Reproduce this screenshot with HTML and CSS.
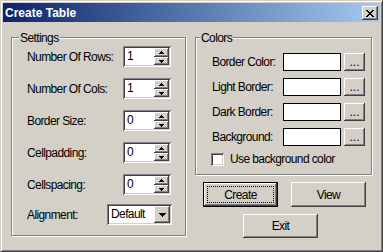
FILE: index.html
```html
<!DOCTYPE html>
<html lang="en">
<head>
    <meta charset="UTF-8">
    <title>Create Table</title>
    <link rel="stylesheet" href="styles.css">
</head>
<body>
    <div class="window">
        <div class="titlebar">
            <span class="title">Create Table</span>
            <button class="close">
                <svg width="8" height="7" viewBox="0 0 8 7" shape-rendering="crispEdges"><path d="M0 0h2v1H0zM6 0h2v1H6zM1 1h2v1H1zM5 1h2v1H5zM2 2h4v1H2zM3 3h2v1H3zM2 4h4v1H2zM1 5h2v1H1zM5 5h2v1H5zM0 6h2v1H0zM6 6h2v1H6z"/></svg>
            </button>
        </div>

        <div class="content">
            <div class="group settings">
                <span class="legend">Settings</span>
                <div class="row">
                    <label>Number Of Rows:</label>
                    <div class="field spin"><span class="val">1</span><div class="spin-btns"><span class="up"><svg width="5" height="3" shape-rendering="crispEdges"><path d="M2 0h1v1h1v1h1v1H0V2h1V1h1z"/></svg></span><span class="down"><svg width="5" height="3" shape-rendering="crispEdges"><path d="M0 0h5v1H4v1H3v1H2V2H1V1H0z"/></svg></span></div></div>
                </div>
                <div class="row">
                    <label>Number Of Cols:</label>
                    <div class="field spin"><span class="val">1</span><div class="spin-btns"><span class="up"><svg width="5" height="3" shape-rendering="crispEdges"><path d="M2 0h1v1h1v1h1v1H0V2h1V1h1z"/></svg></span><span class="down"><svg width="5" height="3" shape-rendering="crispEdges"><path d="M0 0h5v1H4v1H3v1H2V2H1V1H0z"/></svg></span></div></div>
                </div>
                <div class="row">
                    <label>Border Size:</label>
                    <div class="field spin"><span class="val">0</span><div class="spin-btns"><span class="up"><svg width="5" height="3" shape-rendering="crispEdges"><path d="M2 0h1v1h1v1h1v1H0V2h1V1h1z"/></svg></span><span class="down"><svg width="5" height="3" shape-rendering="crispEdges"><path d="M0 0h5v1H4v1H3v1H2V2H1V1H0z"/></svg></span></div></div>
                </div>
                <div class="row">
                    <label>Cellpadding:</label>
                    <div class="field spin"><span class="val">0</span><div class="spin-btns"><span class="up"><svg width="5" height="3" shape-rendering="crispEdges"><path d="M2 0h1v1h1v1h1v1H0V2h1V1h1z"/></svg></span><span class="down"><svg width="5" height="3" shape-rendering="crispEdges"><path d="M0 0h5v1H4v1H3v1H2V2H1V1H0z"/></svg></span></div></div>
                </div>
                <div class="row">
                    <label>Cellspacing:</label>
                    <div class="field spin"><span class="val">0</span><div class="spin-btns"><span class="up"><svg width="5" height="3" shape-rendering="crispEdges"><path d="M2 0h1v1h1v1h1v1H0V2h1V1h1z"/></svg></span><span class="down"><svg width="5" height="3" shape-rendering="crispEdges"><path d="M0 0h5v1H4v1H3v1H2V2H1V1H0z"/></svg></span></div></div>
                </div>
                <div class="row align-row">
                    <label>Alignment:</label>
                    <div class="field select"><span class="val">Default</span><span class="drop"><svg width="7" height="4" shape-rendering="crispEdges"><path d="M0 0h7v1H6v1H5v1H4v1H3V3H2V2H1V1H0z"/></svg></span></div>
                </div>
            </div>

            <div class="side">
                <div class="group colors">
                    <span class="legend">Colors</span>
                    <div class="crow"><label>Border Color:</label><div class="swatch"></div><button class="dots">...</button></div>
                    <div class="crow"><label>Light Border:</label><div class="swatch"></div><button class="dots">...</button></div>
                    <div class="crow"><label>Dark Border:</label><div class="swatch"></div><button class="dots">...</button></div>
                    <div class="crow"><label>Background:</label><div class="swatch"></div><button class="dots">...</button></div>
                    <div class="check"><span class="box"></span><span>Use background color</span></div>
                </div>
                <div class="btnrow">
                    <button class="btn default"><span class="focus">Create</span></button>
                    <button class="btn">View</button>
                </div>
                <div class="btnrow exit-row">
                    <button class="btn exit">Exit</button>
                </div>
            </div>
        </div>
    </div>
</body>
</html>
```

FILE: styles.css
```css
body {
    margin: 0;
    background-color: #d4d0c8;
}
.window {
    width: 383px;
    height: 252px;
    box-sizing: border-box;
    background-color: #d4d0c8;
    border: 1px solid;
    border-color: #d4d0c8 #404040 #404040 #d4d0c8;
    box-shadow: inset 1px 1px #fff, inset -1px -1px #808080;
    padding: 2px;
    font-family: "Liberation Sans", Arial, sans-serif;
    font-size: 12px;
    letter-spacing: -0.6px;
    color: #000;
}
button {
    font: inherit;
    letter-spacing: inherit;
    color: #000;
    margin: 0;
}
.titlebar {
    display: flex;
    align-items: center;
    height: 19px;
    padding: 0 2px;
    background: linear-gradient(to right, #0a246a, #a6caf0);
}
.title {
    flex: 1;
    color: #fff;
    font-weight: bold;
    letter-spacing: 0;
}
.close {
    width: 16px;
    height: 14px;
    padding: 1px 0 0;
    border: none;
    background-color: #d4d0c8;
    box-shadow: inset -1px -1px #404040, inset 1px 1px #fff, inset -2px -2px #808080;
    display: flex;
    align-items: center;
    justify-content: center;
}
.content {
    display: flex;
    gap: 9px;
    padding: 15px 0 0 8px;
}
.group {
    position: relative;
    box-sizing: border-box;
    border: 1px solid #808080;
    box-shadow: inset 1px 1px #fff, 1px 1px #fff;
}
.legend {
    position: absolute;
    top: -7px;
    left: 7px;
    padding: 0 1px;
    line-height: 14px;
    background-color: #d4d0c8;
}
.colors .legend {
    left: 4px;
}
.settings {
    width: 175px;
    height: 199px;
    padding: 8px 14px 0 15px;
    display: flex;
    flex-direction: column;
    gap: 11px;
}
.row {
    display: flex;
    align-items: center;
    justify-content: space-between;
    height: 21px;
}
.align-row {
    margin-top: -2px;
}
.field {
    box-sizing: border-box;
    height: 21px;
    padding: 2px;
    display: flex;
    background-color: #fff;
    box-shadow: inset 1px 1px #808080, inset -1px -1px #fff, inset 2px 2px #404040, inset -2px -2px #d4d0c8;
}
.field .val {
    flex: 1;
    padding-left: 2px;
    line-height: 17px;
}
.spin {
    width: 48px;
}
.spin-btns {
    width: 15px;
    display: flex;
    flex-direction: column;
}
.spin-btns span,
.drop {
    background-color: #d4d0c8;
    box-shadow: inset -1px -1px #404040, inset 1px 1px #fff, inset -2px -2px #808080;
    display: flex;
    align-items: center;
    justify-content: center;
}
.spin-btns .up {
    height: 9px;
}
.spin-btns .down {
    height: 8px;
}
.spin-btns svg {
    display: block;
}
.select {
    width: 65px;
    margin-right: -1px;
}
.drop {
    width: 16px;
}
.drop svg {
    display: block;
}
.side {
    width: 177px;
}
.colors {
    width: 177px;
    height: 138px;
    padding: 15px 6px 0 16px;
}
.crow {
    display: grid;
    grid-template-columns: 1fr 58px 21px;
    column-gap: 3px;
    align-items: center;
    height: 18px;
    margin-bottom: 7px;
}
.swatch {
    box-sizing: border-box;
    height: 18px;
    background-color: #fff;
    border: 1px solid #000;
}
.dots {
    height: 18px;
    padding: 0;
    border: none;
    background-color: #d4d0c8;
    box-shadow: inset -1px -1px #404040, inset 1px 1px #fff, inset -2px -2px #808080;
    line-height: 14px;
    letter-spacing: 0;
}
.check {
    display: flex;
    align-items: center;
    gap: 6px;
    margin: -1px 0 0 -1px;
}
.box {
    width: 13px;
    height: 13px;
    box-sizing: border-box;
    background-color: #fff;
    box-shadow: inset 1px 1px #808080, inset -1px -1px #fff, inset 2px 2px #404040, inset -2px -2px #d4d0c8;
}
.btnrow {
    display: flex;
    gap: 13px;
    padding-left: 8px;
    margin-top: 7px;
}
.btn {
    width: 75px;
    height: 25px;
    padding: 0;
    border: none;
    background-color: #d4d0c8;
    box-shadow: inset -1px -1px #404040, inset 1px 1px #fff, inset -2px -2px #808080;
}
.btn.default {
    border: 1px solid #000;
    padding: 3px;
    display: flex;
}
.focus {
    flex: 1;
    display: flex;
    align-items: center;
    justify-content: center;
    border: 1px dotted #000;
}
.exit-row {
    padding-left: 48px;
}
.btn.exit {
    height: 24px;
}
```
